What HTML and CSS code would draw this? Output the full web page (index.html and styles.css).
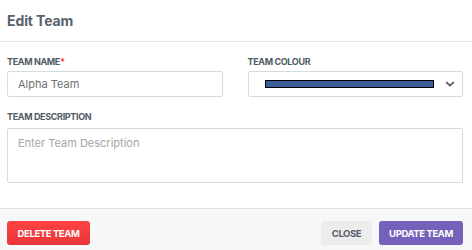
FILE: index.html
```html
<!DOCTYPE html>
<html>

<head>
    <meta charset="UTF-8">
    <title>Edit Team</title>
    <link rel="stylesheet" href="styles.css">
</head>

<body>
    <div class="modal">
        <div class="modal-header">
            <h1>Edit Team</h1>
        </div>

        <div class="modal-body">
            <div class="row">
                <div class="field">
                    <label for="teamName">Team Name<span class="required">*</span></label>
                    <input id="teamName" class="input" type="text" value="Alpha Team">
                </div>
                <div class="field">
                    <label>Team Colour</label>
                    <div class="select">
                        <span class="swatch"></span>
                        <svg class="chevron" width="10" height="6" viewBox="0 0 10 6">
                            <path d="M1.2 1.2 L5 4.6 L8.8 1.2" fill="none" stroke="#555" stroke-width="1.8" />
                        </svg>
                    </div>
                </div>
            </div>

            <div class="field">
                <label for="teamDesc">Team Description</label>
                <textarea id="teamDesc" class="input textarea" placeholder="Enter Team Description"></textarea>
            </div>
        </div>

        <div class="modal-footer">
            <button class="btn btn-danger">Delete Team</button>
            <div class="actions">
                <button class="btn btn-light">Close</button>
                <button class="btn btn-primary">Update Team</button>
            </div>
        </div>
    </div>
</body>

</html>
```

FILE: styles.css
```css
body {
    margin: 0;
    font-family: Inter, "Noto Sans", sans-serif;
    background: #fff;
}

.modal {
    width: 472px;
    height: 250px;
    overflow: hidden;
    display: flex;
    flex-direction: column;
}

.modal-header {
    height: 41px;
    border-bottom: 1px solid #e2e5e7;
    padding: 0 7px;
    display: flex;
    align-items: center;
}

.modal-header h1 {
    margin: 0;
    font-size: 14px;
    font-weight: 700;
    color: #56626c;
    letter-spacing: -0.1px;
}

.modal-body {
    padding: 14px 9px 25px 7px;
}

.row {
    display: grid;
    grid-template-columns: 1fr 1fr;
    column-gap: 25px;
    margin-bottom: 14px;
}

.field label {
    display: block;
    height: 11px;
    line-height: 11px;
    font-size: 9px;
    font-weight: 700;
    text-transform: uppercase;
    letter-spacing: -0.35px;
    color: #4e5a65;
    margin-bottom: 4px;
}

.required {
    color: #f04545;
}

.input {
    display: block;
    box-sizing: border-box;
    width: 100%;
    height: 26px;
    border: 1px solid #d3dcdf;
    border-radius: 2px;
    padding: 0 10px;
    font-family: inherit;
    font-size: 11px;
    color: #6e6e6e;
    background: #fff;
    outline: none;
}

.textarea {
    height: 55px;
    padding: 7px 10px;
    resize: none;
    margin-top: 6px;
}

.textarea::placeholder {
    color: #a6a6a6;
}

.select {
    box-sizing: border-box;
    height: 26px;
    border: 1px solid #d3dcdf;
    border-radius: 2px;
    display: flex;
    align-items: center;
    padding: 0 7px 0 16px;
}

.swatch {
    width: 167px;
    height: 6px;
    background: #3c5f9c;
    border: 1px solid #000;
}

.chevron {
    margin-left: auto;
}

.modal-footer {
    flex: 1;
    background: #f6f7f9;
    border-top: 1px solid #dfe2e5;
    padding: 12px 9px 0 7px;
    display: flex;
    justify-content: space-between;
    align-items: flex-start;
}

.actions {
    display: flex;
    gap: 7px;
}

.btn {
    height: 24px;
    border: none;
    border-radius: 3px;
    padding: 0;
    font-family: inherit;
    font-size: 9.5px;
    font-weight: 700;
    letter-spacing: -0.4px;
    text-transform: uppercase;
    cursor: pointer;
}

.btn-danger {
    width: 83px;
    color: #fff;
    background: linear-gradient(#ff4242, #e8353a);
}

.btn-light {
    width: 51px;
    color: #55606b;
    background: #ececed;
}

.btn-primary {
    width: 84px;
    color: #fff;
    background: #7561b9;
}
```
